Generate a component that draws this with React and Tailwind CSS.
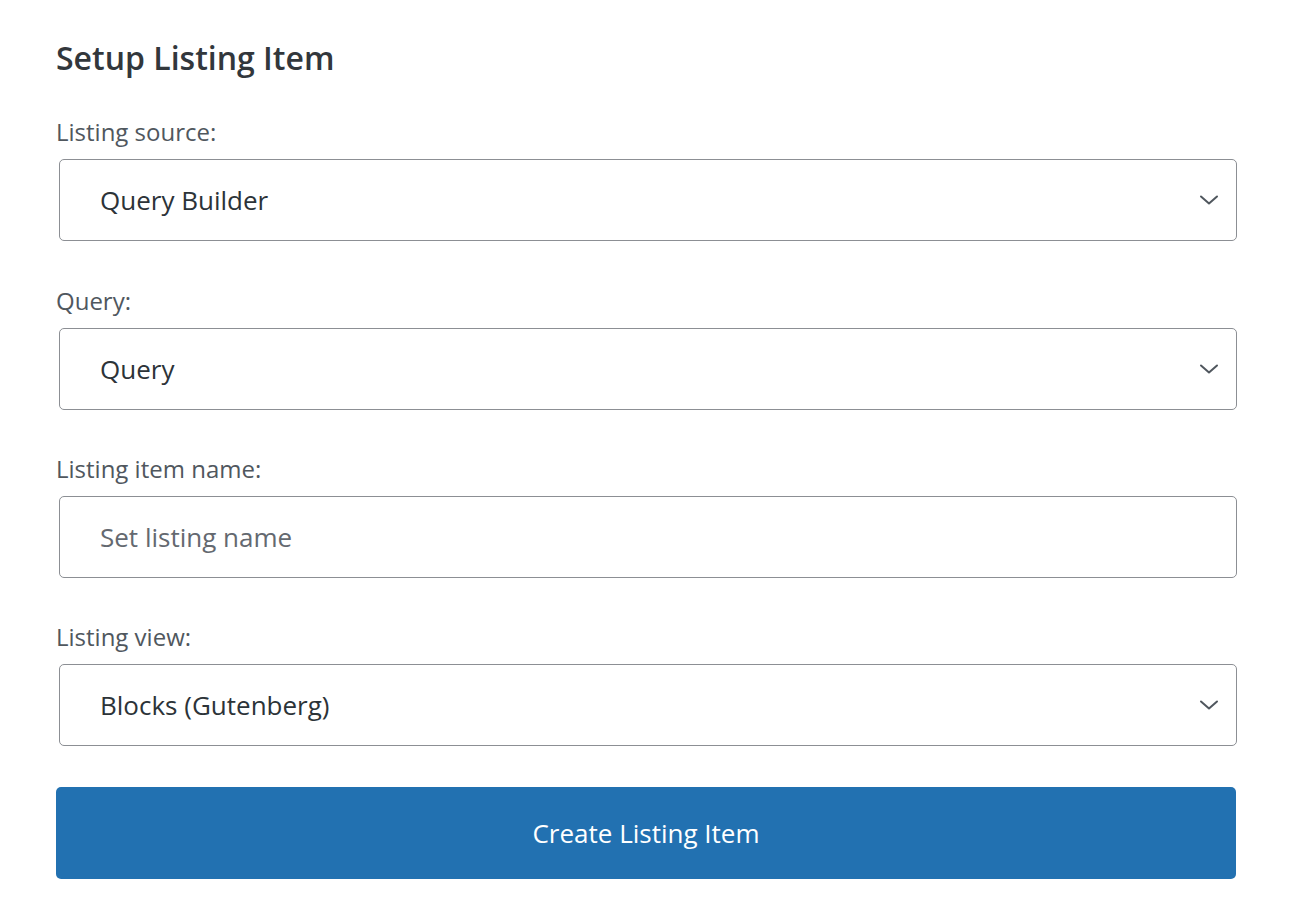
import React from 'react';

const font = { fontFamily: '"Open Sans", "Noto Sans", sans-serif' };

function Chevron() {
  return (
    <svg width="22" height="14" viewBox="0 0 22 14" fill="none" className="shrink-0">
      <path d="M3 3.5l8 7 8-7" stroke="#50575e" strokeWidth="2" strokeLinecap="round" strokeLinejoin="round" />
    </svg>
  );
}

function Label({ children, className = '' }) {
  return <div className={`text-[24px] leading-[30px] text-[#50575e] ${className}`}>{children}</div>;
}

function SelectBox({ value }) {
  return (
    <div className="ml-[3px] w-[1178px] h-[82px] mt-[12px] border-[1.5px] border-[#8c8f94] rounded-[5px] bg-white flex items-center justify-between pl-[40px] pr-[16px]">
      <span className="text-[26px] text-[#2c3338]">{value}</span>
      <Chevron />
    </div>
  );
}

export default function App() {
  return (
    <div className="min-h-[920px] w-[1292px] bg-white px-[56px] pt-[38px]" style={font}>
      <h1 className="text-[32px] leading-[40px] font-semibold text-[#32373c]">Setup Listing Item</h1>

      <Label className="mt-[39px]">Listing source:</Label>
      <SelectBox value="Query Builder" />

      <Label className="mt-[45px]">Query:</Label>
      <SelectBox value="Query" />

      <Label className="mt-[44px]">Listing item name:</Label>
      <div className="ml-[3px] w-[1178px] h-[82px] mt-[12px] border-[1.5px] border-[#8c8f94] rounded-[5px] bg-white flex items-center pl-[40px]">
        <input
          className="w-full outline-none text-[26px] text-[#2c3338] placeholder:text-[#646970] bg-transparent"
          placeholder="Set listing name"
          style={font}
        />
      </div>

      <Label className="mt-[44px]">Listing view:</Label>
      <SelectBox value="Blocks (Gutenberg)" />

      <button
        className="mt-[41px] w-[1180px] h-[92px] rounded-[5px] bg-[#2271b1] text-white text-[26px] flex items-center justify-center"
        style={font}
      >
        Create Listing Item
      </button>
    </div>
  );
}
